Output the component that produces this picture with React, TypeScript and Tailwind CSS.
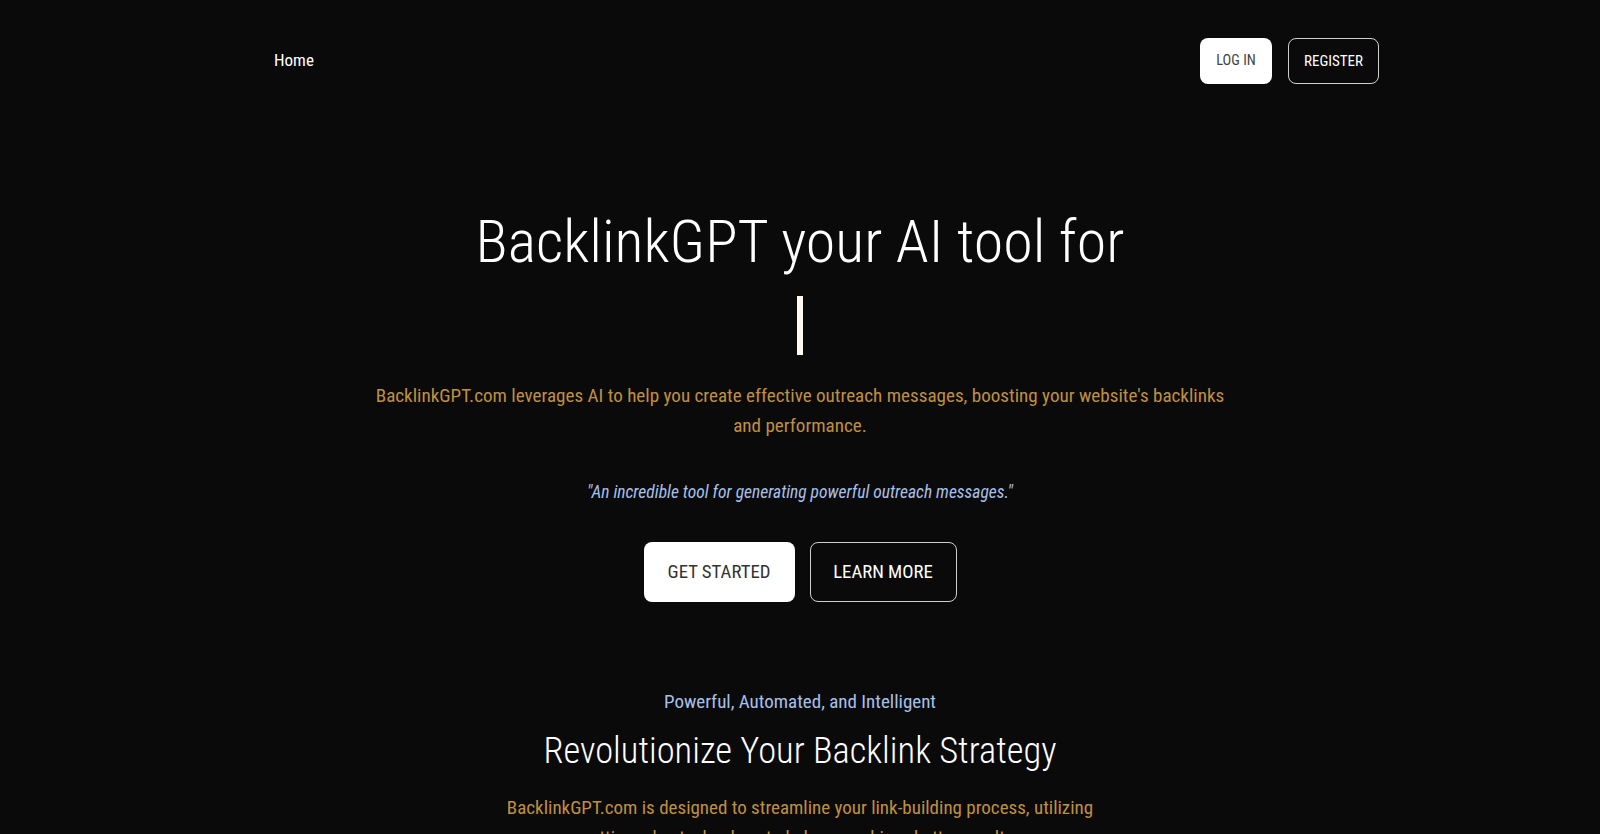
export default function App() {
  return (
    <div className="min-h-screen overflow-hidden bg-[#0a0a0a] font-['Roboto',sans-serif] text-white font-stretch-condensed">
      <nav className="flex items-center justify-between pl-[274px] pr-[221px] pt-[38px]">
        <a className="text-[17px] text-white">Home</a>
        <div className="flex items-center gap-[16px]">
          <button className="h-[46px] w-[72px] rounded-lg bg-white text-[14.5px] text-[#444]">LOG IN</button>
          <button className="h-[46px] w-[91px] rounded-lg border border-white/80 text-[15px] text-white">REGISTER</button>
        </div>
      </nav>

      <main className="flex flex-col items-center text-center">
        <h1 className="mt-[128px] text-[60px] leading-[60px] font-[340] text-white">BacklinkGPT your AI tool for</h1>
        <div className="mt-[24px] h-[59px] w-[6px] bg-[#fff8f0]"></div>
        <p className="mt-[26px] w-[870px] text-[19.1px] leading-[30px] text-[#c0903e]">
          BacklinkGPT.com leverages AI to help you create effective outreach messages, boosting your website's backlinks
          and performance.
        </p>
        <p className="mt-[39px] text-[17.5px] leading-[24px] italic text-[#a8c0ec]">
          "An incredible tool for generating powerful outreach messages."
        </p>
        <div className="mt-[38px] flex gap-[15px]">
          <button className="h-[60px] w-[151px] rounded-lg bg-white text-[18.75px] text-[#333]">GET STARTED</button>
          <button className="h-[60px] w-[147px] rounded-lg border border-white/80 text-[18.75px] text-white">LEARN MORE</button>
        </div>
        <p className="mt-[86px] text-[19px] leading-[28px] text-[#a8c0ec]">Powerful, Automated, and Intelligent</p>
        <h2 className="mt-[13px] text-[36.5px] leading-[44px] font-[340] text-white">Revolutionize Your Backlink Strategy</h2>
        <p className="mt-[20px] w-[600px] text-[19px] leading-[30px] text-[#c0903e]">
          BacklinkGPT.com is designed to streamline your link-building process, utilizing cutting-edge technology to help
          you achieve better results.
        </p>
      </main>
    </div>
  );
}
